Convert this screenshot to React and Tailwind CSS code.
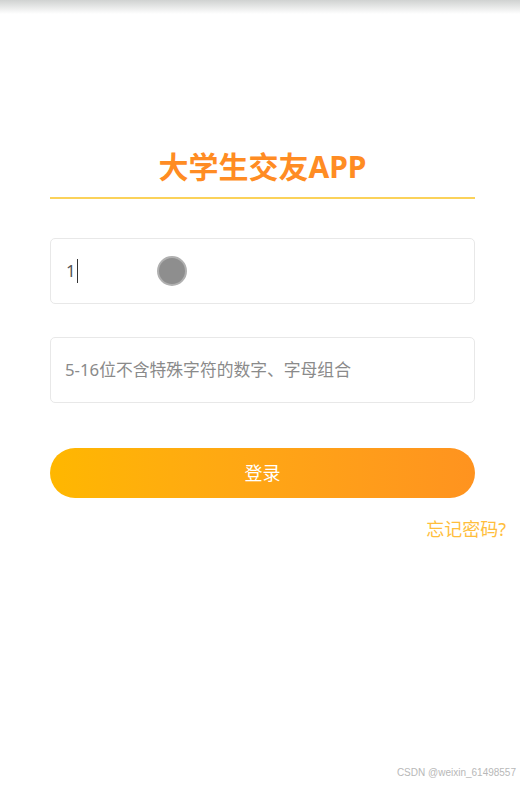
import React from "react";

export default function App() {
  return (
    <div
      className="relative w-[520px] h-[786px] bg-white overflow-hidden"
      style={{ fontFamily: '"Noto Sans", "Noto Sans CJK SC", sans-serif' }}
    >
      <div className="h-[14px] bg-gradient-to-b from-[#d0d2d1] to-white" />
      <div className="pl-[50px] pr-[45px] pt-[132px]">
        <div className="text-center text-[30px] leading-[42px] font-bold text-[#ff8c23]">
          大学生交友APP
        </div>
        <div className="mt-[9px] h-[2px] bg-[#fbd25a]" />
        <div className="mt-[39px] h-[66px] border border-[#e8e8e8] rounded-[5px] flex items-center pl-[15px] relative">
          <span className="text-[17px] text-[#555]">1</span>
          <span className="w-[1.5px] h-[24px] bg-[#333] ml-[1px]" />
          <span className="absolute left-[106px] top-[17px] w-[30px] h-[30px] rounded-full bg-[#8e8e8e] border-[2px] border-[#b0b0b0]" />
        </div>
        <div className="mt-[33px] h-[66px] border border-[#e8e8e8] rounded-[5px] flex items-center pl-[14px]">
          <span className="text-[16.8px] text-[#8a8a8a]">5-16位不含特殊字符的数字、字母组合</span>
        </div>
        <div className="mt-[45px] h-[50px] rounded-full bg-gradient-to-r from-[#ffb700] to-[#ff931f] flex items-center justify-center">
          <span className="text-[18px] text-white">登录</span>
        </div>
      </div>
      <div className="flex justify-end pr-[14px] mt-[18px]">
        <span className="text-[18px] text-[#ffbe3c]">忘记密码?</span>
      </div>
      <div
        className="absolute right-[4px] bottom-[6px] text-[10px] text-[#b8b8b8]"
        style={{ fontFamily: '"Liberation Sans", sans-serif' }}
      >
        CSDN @weixin_61498557
      </div>
    </div>
  );
}
